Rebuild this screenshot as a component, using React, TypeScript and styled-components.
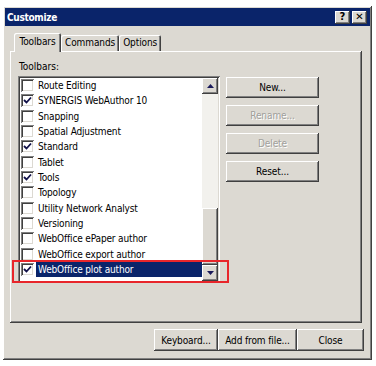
import React from "react";
import styled, { createGlobalStyle, css } from "styled-components";

const GlobalStyle = createGlobalStyle`
  html, body { margin: 0; padding: 0; background: #ffffff; }
  body { font-family: "DejaVu Sans Condensed", "DejaVu Sans", sans-serif; font-size: 10px; color: #000; }
  * { box-sizing: border-box; }
`;

const FACE = "#dcd9d2";
const NAVY = "#0a246a";

const raised = css`
  box-shadow: inset -1px -1px 0 #404040, inset 1px 1px 0 #ffffff, inset -2px -2px 0 #808080, inset 2px 2px 0 ${FACE};
`;
const sunken = css`
  box-shadow: inset 1px 1px 0 #808080, inset -1px -1px 0 #ffffff, inset 2px 2px 0 #404040, inset -2px -2px 0 ${FACE};
`;

const Dialog = styled.div`
  position: relative;
  margin: 6px 0 0 3px;
  width: 369px;
  height: 354px;
  background: ${FACE};
  padding: 2px;
  display: flex;
  flex-direction: column;
  ${raised};
`;

const TitleBar = styled.div`
  height: 18px;
  background: ${NAVY};
  display: flex;
  align-items: center;
  justify-content: space-between;
  padding: 0 3px 0 2px;
`;

const Title = styled.span`
  color: #fff;
  font-weight: bold;
  font-size: 10px;
  letter-spacing: -0.3px;
`;

const CaptionButtons = styled.div`
  display: flex;
  gap: 2px;
`;

const CaptionButton = styled.div`
  width: 15px;
  height: 13px;
  background: ${FACE};
  ${raised};
  display: flex;
  align-items: center;
  justify-content: center;
  font-family: "DejaVu Sans", sans-serif;
  font-weight: bold;
  font-size: 10px;
  line-height: 1;
  color: #000;
`;

const Body = styled.div`
  flex: 1;
  display: flex;
  flex-direction: column;
  padding: 6px 6px 0 5px;
`;

const TabStrip = styled.div`
  display: flex;
  align-items: flex-end;
  padding-left: 4px;
  height: 19px;
  position: relative;
  z-index: 1;
`;

const Tab = styled.div<{ $active?: boolean }>`
  height: ${(p) => (p.$active ? "19px" : "16px")};
  margin-bottom: ${(p) => (p.$active ? "-1px" : "0")};
  padding: ${(p) => (p.$active ? "3px 5px 0 5px" : "2px 4px 0 4px")};
  width: ${(p) => (p.$active ? "47px" : "auto")};
  background: ${FACE};
  font-size: 10px;
  letter-spacing: -0.1px;
  display: flex;
  align-items: flex-start;
  justify-content: center;
  border-top-left-radius: 2px;
  border-top-right-radius: 2px;
  box-shadow: inset 1px 1px 0 #ffffff, inset -1px 0 0 #404040, inset -2px 0 0 #808080;
`;

const Panel = styled.div`
  width: 352px;
  height: 272px;
  background: ${FACE};
  ${raised};
  padding: 10px 8px 0 8px;
  display: flex;
  flex-direction: column;
`;

const Label = styled.div`
  font-size: 10px;
  height: 15px;
  line-height: 12px;
  padding-left: 1px;
`;

const ListRow = styled.div`
  display: flex;
  align-items: flex-start;
  gap: 6px;
`;

const ListBox = styled.div`
  width: 202px;
  height: 207px;
  background: #fff;
  ${sunken};
  padding: 2px;
  display: flex;
`;

const Items = styled.div`
  flex: 1;
  display: flex;
  flex-direction: column;
`;

const Item = styled.div`
  height: 15.33px;
  display: flex;
  align-items: center;
  padding-left: 1px;
`;

const Check = styled.div`
  width: 13px;
  height: 13px;
  flex: none;
  background: #fff;
  ${sunken};
  display: flex;
  align-items: center;
  justify-content: center;
`;

const ItemText = styled.span<{ $selected?: boolean }>`
  margin-left: 2px;
  padding: 0 2px 0 2px;
  height: 15px;
  line-height: 15px;
  font-size: 10px;
  letter-spacing: -0.15px;
  flex: 1;
  color: ${(p) => (p.$selected ? "#fff" : "#000")};
  background: ${(p) => (p.$selected ? NAVY : "transparent")};
`;

const ScrollBar = styled.div`
  width: 16px;
  display: flex;
  flex-direction: column;
`;

const ScrollButton = styled.div`
  width: 16px;
  height: 16px;
  background: ${FACE};
  ${raised};
  display: flex;
  align-items: center;
  justify-content: center;
`;

const Track = styled.div`
  flex: 1;
  background: #f2f1ed;
  display: flex;
  flex-direction: column;
  justify-content: flex-end;
`;

const Thumb = styled.div`
  height: 57px;
  background: ${FACE};
  ${raised};
`;

const SideButtons = styled.div`
  display: flex;
  flex-direction: column;
  gap: 7px;
  margin-top: 1px;
`;

const Button = styled.div<{ $w: number; $disabled?: boolean }>`
  width: ${(p) => p.$w}px;
  height: ${(p) => (p.$w > 90 ? 21 : 22)}px;
  background: ${FACE};
  ${raised};
  display: flex;
  align-items: center;
  justify-content: center;
  font-size: 10px;
  letter-spacing: -0.1px;
  color: ${(p) => (p.$disabled ? "#a09f9b" : "#000")};
  text-shadow: ${(p) => (p.$disabled ? "1px 1px 0 #ffffff" : "none")};
`;

const BottomBar = styled.div`
  display: flex;
  justify-content: flex-end;
  margin-top: 6px;
`;

const Highlight = styled.div`
  position: absolute;
  left: 9px;
  top: 254px;
  width: 217px;
  height: 23px;
  border: 2px solid #e8262b;
  pointer-events: none;
`;

const CheckMark = () => (
  <svg width="9" height="9" viewBox="0 0 9 9">
    <polyline points="1,4 3.5,6.5 8,1.5" fill="none" stroke="#101048" strokeWidth="1.8" />
  </svg>
);

const Arrow = ({ up }: { up?: boolean }) => (
  <svg width="7" height="4" viewBox="0 0 7 4">
    <polygon points={up ? "0,4 7,4 3.5,0" : "0,0 7,0 3.5,4"} fill="#1a1a5a" />
  </svg>
);

const items: { name: string; checked: boolean }[] = [
  { name: "Route Editing", checked: false },
  { name: "SYNERGIS WebAuthor 10", checked: true },
  { name: "Snapping", checked: false },
  { name: "Spatial Adjustment", checked: false },
  { name: "Standard", checked: true },
  { name: "Tablet", checked: false },
  { name: "Tools", checked: true },
  { name: "Topology", checked: false },
  { name: "Utility Network Analyst", checked: false },
  { name: "Versioning", checked: false },
  { name: "WebOffice ePaper author", checked: false },
  { name: "WebOffice export author", checked: false },
  { name: "WebOffice plot author", checked: true },
];

export default function App() {
  return (
    <>
      <GlobalStyle />
      <Dialog>
        <TitleBar>
          <Title>Customize</Title>
          <CaptionButtons>
            <CaptionButton>?</CaptionButton>
            <CaptionButton>✕</CaptionButton>
          </CaptionButtons>
        </TitleBar>
        <Body>
          <TabStrip>
            <Tab $active>Toolbars</Tab>
            <Tab>Commands</Tab>
            <Tab>Options</Tab>
          </TabStrip>
          <Panel>
            <Label>Toolbars:</Label>
            <ListRow>
              <ListBox>
                <Items>
                  {items.map((it, i) => (
                    <Item key={it.name}>
                      <Check>{it.checked && <CheckMark />}</Check>
                      <ItemText $selected={i === items.length - 1}>{it.name}</ItemText>
                    </Item>
                  ))}
                </Items>
                <ScrollBar>
                  <ScrollButton>
                    <Arrow up />
                  </ScrollButton>
                  <Track>
                    <Thumb />
                  </Track>
                  <ScrollButton>
                    <Arrow />
                  </ScrollButton>
                </ScrollBar>
              </ListBox>
              <SideButtons>
                <Button $w={93}>New...</Button>
                <Button $w={93} $disabled>Rename...</Button>
                <Button $w={93} $disabled>Delete</Button>
                <Button $w={93}>Reset...</Button>
              </SideButtons>
            </ListRow>
          </Panel>
          <BottomBar>
            <Button $w={64}>Keyboard...</Button>
            <Button $w={79}>Add from file...</Button>
            <Button $w={67}>Close</Button>
          </BottomBar>
        </Body>
        <Highlight />
      </Dialog>
    </>
  );
}
